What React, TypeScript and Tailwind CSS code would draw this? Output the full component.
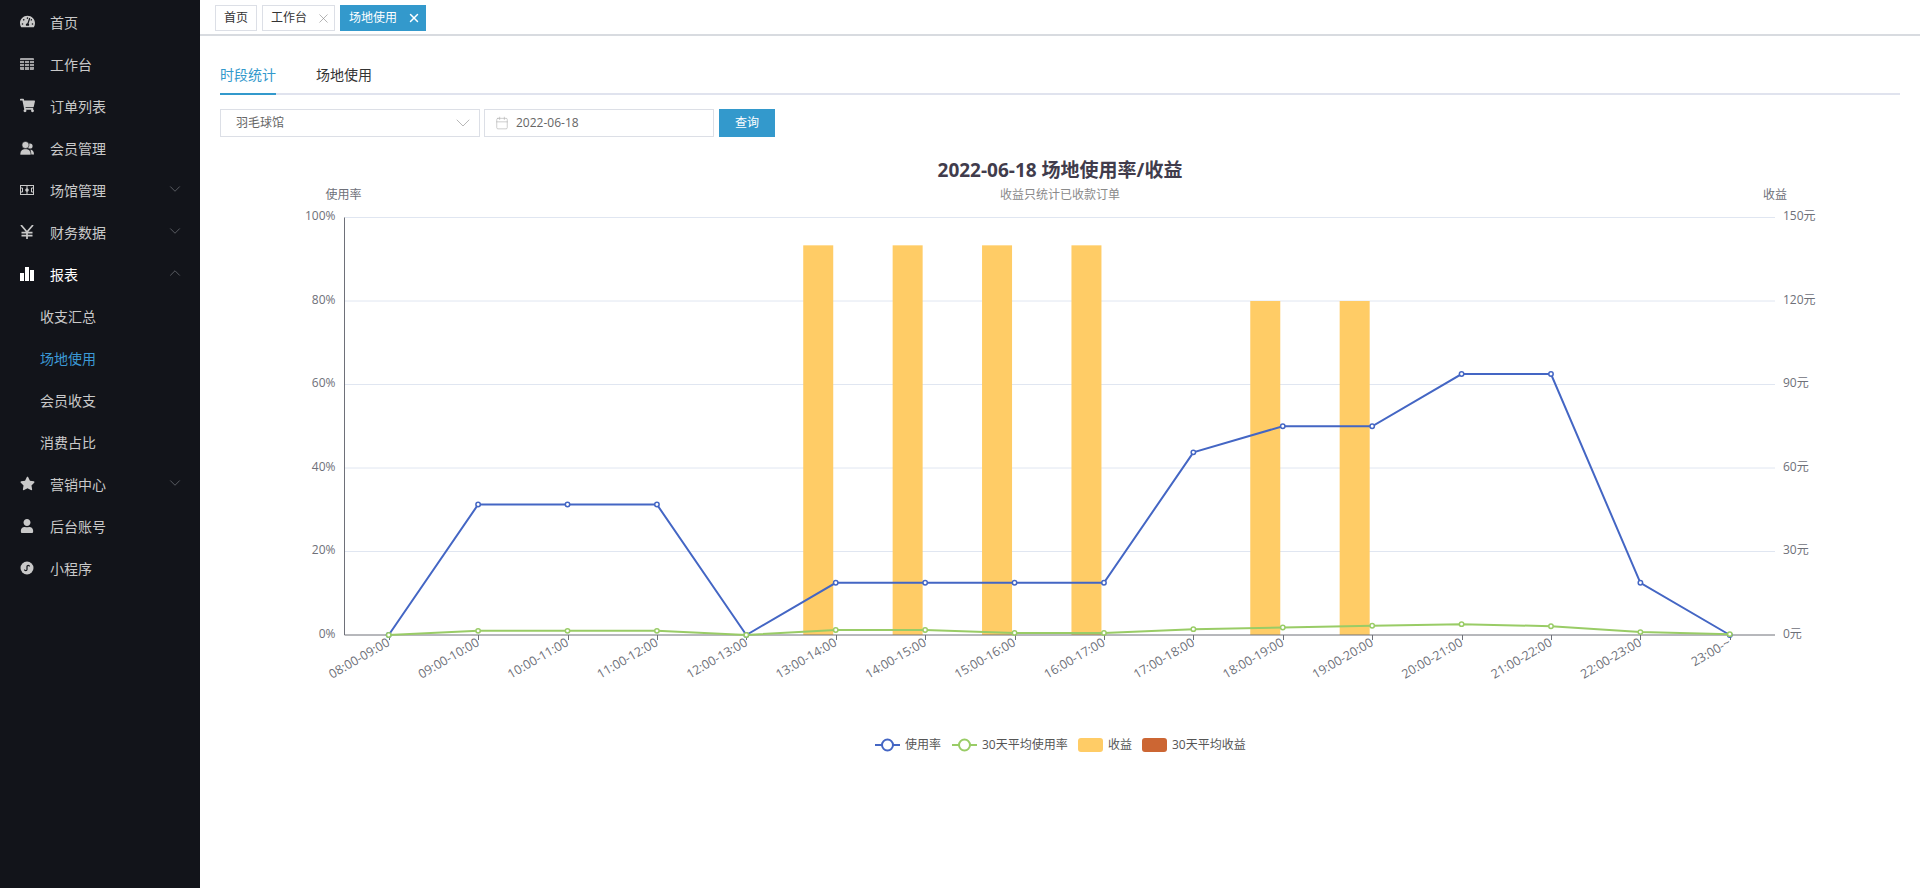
import React from 'react';
import { ChevronDown, ChevronUp, X, Calendar } from 'lucide-react';
import { FaTachometerAlt, FaShoppingCart, FaStar, FaUser } from 'react-icons/fa';

const font = "font-['Open_Sans','Noto_Sans_CJK_SC',sans-serif]";

const TableIcon = () => (
    <svg width="14" height="14" viewBox="0 0 14 14" className="text-[#a2a2a4]">
        <rect x="0" y="1" width="14" height="12" rx="1" fill="currentColor" />
        <path d="M4.5 3v10M9.5 3v10M0 3.5h14M0 6.5h14M0 9.5h14" stroke="#12141a" strokeWidth="0.9" />
    </svg>
);

const UsersIcon = () => (
    <svg width="14" height="14" viewBox="0 0 14 14" fill="currentColor">
        <circle cx="10" cy="5" r="2.6" />
        <path d="M10.5 8.5c2 .3 3.5 2 3.5 5h-3z" />
        <circle cx="5.5" cy="4" r="3.6" stroke="#12141a" strokeWidth="0.6" />
        <path d="M0 14c0-4 1.8-6.2 5.5-6.2S11 10 11 14z" stroke="#12141a" strokeWidth="0.6" />
    </svg>
);

const YenIcon = () => (
    <svg width="14" height="14" viewBox="0 0 14 14" fill="none" stroke="currentColor" strokeWidth="1.7">
        <path d="M1 0l6 7 6-7M7 7v7M1.5 7.7h11M1.5 10.6h11" />
    </svg>
);

const FieldIcon = () => (
    <svg width="14" height="14" viewBox="0 0 14 14" fill="none" stroke="currentColor">
        <rect x="0.5" y="2.5" width="13" height="9" strokeWidth="1" />
        <line x1="7" y1="2.5" x2="7" y2="11.5" strokeWidth="1" />
        <circle cx="7" cy="7" r="1.5" fill="currentColor" strokeWidth="0.5" />
        <path d="M0.5 5h2v4h-2M13.5 5h-2v4h2" strokeWidth="1" />
    </svg>
);

const BarsIcon = () => (
    <svg width="14" height="14" viewBox="0 0 14 14" fill="currentColor">
        <rect x="0" y="6" width="4" height="8" />
        <rect x="5" y="0" width="4" height="14" />
        <rect x="10" y="3" width="4" height="11" />
    </svg>
);

const MiniIcon = () => (
    <svg width="14" height="14" viewBox="0 0 14 14">
        <circle cx="7" cy="7" r="6.5" fill="currentColor" />
        <path d="M4.5 8.5c0 1.6 2.4 1.6 2.5 0V5.5c0-1.6 2.5-1.6 2.5 0" fill="none" stroke="#12141a" strokeWidth="1.2" />
    </svg>
);

type NavItem = { label: string; icon?: React.ReactNode; arrow?: 'down' | 'up'; sub?: boolean; active?: boolean; open?: boolean };

const nav: NavItem[] = [
    { label: '首页', icon: <FaTachometerAlt size={15} /> },
    { label: '工作台', icon: <TableIcon /> },
    { label: '订单列表', icon: <FaShoppingCart size={15} /> },
    { label: '会员管理', icon: <UsersIcon /> },
    { label: '场馆管理', icon: <FieldIcon />, arrow: 'down' },
    { label: '财务数据', icon: <YenIcon />, arrow: 'down' },
    { label: '报表', icon: <BarsIcon />, arrow: 'up', open: true },
    { label: '收支汇总', sub: true },
    { label: '场地使用', sub: true, active: true },
    { label: '会员收支', sub: true },
    { label: '消费占比', sub: true },
    { label: '营销中心', icon: <FaStar size={15} />, arrow: 'down' },
    { label: '后台账号', icon: <FaUser size={14} /> },
    { label: '小程序', icon: <MiniIcon /> },
];

const Sidebar = () => (
    <aside className="w-[200px] h-full shrink-0 bg-[#12141a] pt-[2px] text-[14px] text-[#c9c9c9]">
        {nav.map((item) => (
            <div key={item.label} className={`h-[42px] flex items-center pr-[16px] ${item.sub ? 'pl-[40px]' : 'pl-[20px]'} ${item.open ? 'text-white' : ''} ${item.active ? 'text-[#3c9ad6]' : ''}`}>
                {item.icon && <span className="w-[30px] shrink-0 -mt-[3px]">{item.icon}</span>}
                <span className="flex-1 leading-none">{item.label}</span>
                {item.arrow === 'down' && <ChevronDown size={18} strokeWidth={0.9} className="text-[#7a7d83] -mt-[4px]" />}
                {item.arrow === 'up' && <ChevronUp size={18} strokeWidth={0.9} className="text-[#7a7d83] -mt-[4px]" />}
            </div>
        ))}
    </aside>
);

const TabBar = () => (
    <div className="h-[36px] shrink-0 border-b-2 border-[#d8dbe0] bg-white flex items-start gap-[5px] pt-[5px] pl-[15px] text-[12px]">
        <div className="h-[26px] w-[42px] flex items-center justify-center border border-[#dcdfe6] text-[#333]">首页</div>
        <div className="h-[26px] w-[73px] flex items-center pl-[8px] border border-[#dcdfe6] text-[#333]">
            <span className="flex-1">工作台</span>
            <X size={15} strokeWidth={1} className="text-[#888] mr-[3px]" />
        </div>
        <div className="h-[26px] w-[86px] flex items-center pl-[9px] bg-[#3399cc] text-white">
            <span className="flex-1">场地使用</span>
            <X size={14} strokeWidth={2.5} className="mr-[5px]" />
        </div>
    </div>
);

const PageTabs = () => (
    <div className="h-[39px] flex gap-[40px] border-b-2 border-[#e0e3ee] text-[14px] text-[#333]">
        <div className="w-[56px] h-[39px] leading-[38px] text-[#3399cc] border-b-2 border-[#3399cc] whitespace-nowrap">时段统计</div>
        <div className="w-[56px] leading-[38px] whitespace-nowrap">场地使用</div>
    </div>
);

const Filters = () => (
    <div className="flex items-stretch h-[28px] mt-[14px] text-[12px] text-[#666]">
        <div className="w-[260px] flex items-center justify-between pl-[15px] pr-[4px] border border-[#dcdfe6]">
            <span>羽毛球馆</span>
            <ChevronDown size={24} strokeWidth={0.7} className="text-[#999]" />
        </div>
        <div className="w-[230px] ml-[4px] flex items-center pl-[10px] border border-[#dcdfe6]">
            <Calendar size={14} strokeWidth={1} className="text-[#aaa] mr-[7px]" />
            <span>2022-06-18</span>
        </div>
        <button className="w-[56px] ml-[5px] bg-[#3399cc] text-white">查询</button>
    </div>
);

// chart geometry, in page pixels
const left = 344.5;
const right = 1775;
const top = 217.5;
const bottom = 635;
const step = (right - left) / 16;
const xAt = (i: number) => left - 0.5 + step * (i + 0.5);
const yAt = (pct: number) => bottom - ((bottom - top) * pct) / 100;

const hours = ['08:00-09:00', '09:00-10:00', '10:00-11:00', '11:00-12:00', '12:00-13:00', '13:00-14:00', '14:00-15:00', '15:00-16:00', '16:00-17:00', '17:00-18:00', '18:00-19:00', '19:00-20:00', '20:00-21:00', '21:00-22:00', '22:00-23:00', '23:00-~'];
const usage = [0, 31.25, 31.25, 31.25, 0, 12.5, 12.5, 12.5, 12.5, 43.75, 50, 50, 62.5, 62.5, 12.5, 0];
const avg = [0, 1, 1, 1, 0, 1.2, 1.2, 0.5, 0.5, 1.4, 1.8, 2.2, 2.6, 2.1, 0.7, 0.2];
const income = [0, 0, 0, 0, 0, 140, 140, 140, 140, 0, 120, 120, 0, 0, 0, 0];
const leftTicks = [0, 20, 40, 60, 80, 100];
const rightTicks = ['0元', '30元', '60元', '90元', '120元', '150元'];

const BLUE = '#4466c4';
const GREEN = '#99cc66';
const YELLOW = '#ffcc66';
const ORANGE = '#cc6633';

const Line = ({ data, color }: { data: number[]; color: string }) => (
    <g>
        <polyline points={data.map((v, i) => `${xAt(i)},${yAt(v)}`).join(' ')} fill="none" stroke={color} strokeWidth="2" />
        {data.map((v, i) => (
            <circle key={i} cx={xAt(i)} cy={yAt(v)} r="2.2" fill="#fff" stroke={color} strokeWidth="1.5" />
        ))}
    </g>
);

const LegendLine = ({ x, color }: { x: number; color: string }) => (
    <g>
        <line x1={x} x2={x + 25} y1="745" y2="745" stroke={color} strokeWidth="2" />
        <circle cx={x + 12.5} cy="745" r="5.5" fill="#fff" stroke={color} strokeWidth="2" />
    </g>
);

const Chart = () => (
    <svg width="1680" height="620" viewBox="220 150 1680 620" className="block">
        <text x="1060" y="177" textAnchor="middle" fontSize="19" fontWeight="700" fill="#413c4c">2022-06-18 场地使用率/收益</text>
        <text x="1060" y="199" textAnchor="middle" fontSize="12" fill="#8a8a8a">收益只统计已收款订单</text>
        <text x={left - 1} y="199" textAnchor="middle" fontSize="12" fill="#6e7079">使用率</text>
        <text x={right} y="199" textAnchor="middle" fontSize="12" fill="#6e7079">收益</text>

        {leftTicks.map((t, i) => (
            <g key={t} fontSize="12" fill="#6e7079">
                {t > 0 && <line x1={left} x2={right} y1={yAt(t)} y2={yAt(t)} stroke="#e0e6f1" />}
                <text x={left - 9} y={yAt(t) + 2.5} textAnchor="end">{t}%</text>
                <text x={right + 8} y={yAt(t) + 2.5}>{rightTicks[i]}</text>
            </g>
        ))}

        {income.map((v, i) => v > 0 && (
            <rect key={i} x={xAt(i) - 32.5} y={yAt(v / 1.5)} width="30" height={bottom - yAt(v / 1.5)} fill={YELLOW} />
        ))}

        <line x1={left} x2={left} y1={top} y2={bottom} stroke="#6e7079" />
        <line x1={left} x2={right} y1={bottom} y2={bottom} stroke="#6e7079" />
        {hours.map((h, i) => (
            <g key={h}>
                <line x1={Math.round(xAt(i)) + 0.5} x2={Math.round(xAt(i)) + 0.5} y1={bottom} y2={bottom + 5} stroke="#6e7079" />
                <text transform={`translate(${xAt(i) + 2} 645) rotate(-30)`} textAnchor="end" fontSize="12.5" fill="#6e7079">{h}</text>
            </g>
        ))}

        <Line data={usage} color={BLUE} />
        <Line data={avg} color={GREEN} />

        <g fontSize="12" fill="#555">
            <LegendLine x={875} color={BLUE} />
            <text x="905" y="749">使用率</text>
            <LegendLine x={952} color={GREEN} />
            <text x="982" y="749">30天平均使用率</text>
            <rect x="1078" y="738" width="25" height="14" rx="3" fill={YELLOW} />
            <text x="1108" y="749">收益</text>
            <rect x="1142" y="738" width="25" height="14" rx="3" fill={ORANGE} />
            <text x="1172" y="749">30天平均收益</text>
        </g>
    </svg>
);

export default function App() {
    return (
        <div className={`flex h-screen w-full overflow-hidden bg-white ${font}`}>
            <Sidebar />
            <main className="flex-1 flex flex-col min-w-0">
                <TabBar />
                <div className="pt-[20px] px-[20px]">
                    <PageTabs />
                    <Filters />
                    <div className="mt-[13px]">
                        <Chart />
                    </div>
                </div>
            </main>
        </div>
    );
}
